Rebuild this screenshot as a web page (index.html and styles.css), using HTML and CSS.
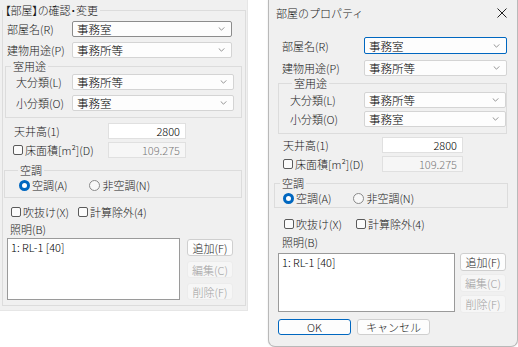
FILE: index.html
```html
<!doctype html>
<html lang="ja">
  <head>
    <meta charset="UTF-8" />
    <title>部屋のプロパティ</title>
    <link rel="stylesheet" href="styles.css">
  </head>
  <body>
    <main class="screen">
      <!-- embedded panel -->
      <section class="panel">
        <fieldset class="group group-main">
          <legend class="legend legend-main">【部屋】の確認・変更</legend>
          <div class="field p-row1">
            <span class="label p-lbl1">部屋名(R)</span>
            <div class="combo combo-hot p-combo">事務室<svg class="chev" viewBox="0 0 8 5"><polyline points="0.5,0.5 4,4 7.5,0.5" /></svg></div>
          </div>
          <div class="field p-row2">
            <span class="label p-lbl1">建物用途(P)</span>
            <div class="combo p-combo">事務所等<svg class="chev" viewBox="0 0 8 5"><polyline points="0.5,0.5 4,4 7.5,0.5" /></svg></div>
          </div>
          <fieldset class="group p-sub">
            <legend class="legend p-sub-legend">室用途</legend>
            <div class="field">
              <span class="label p-lbl2">大分類(L)</span>
              <div class="combo p-combo2">事務所等<svg class="chev" viewBox="0 0 8 5"><polyline points="0.5,0.5 4,4 7.5,0.5" /></svg></div>
            </div>
            <div class="field p-row-sm">
              <span class="label p-lbl2">小分類(O)</span>
              <div class="combo p-combo2">事務室<svg class="chev" viewBox="0 0 8 5"><polyline points="0.5,0.5 4,4 7.5,0.5" /></svg></div>
            </div>
          </fieldset>
          <div class="field p-height">
            <span class="label p-lbl3">天井高(1)</span>
            <div class="edit p-edit">2800</div>
          </div>
          <div class="field p-area">
            <label class="check p-lbl4"><span class="box"></span>床面積[m²](D)</label>
            <div class="edit edit-off p-edit">109.275</div>
          </div>
          <fieldset class="group p-air">
            <legend class="legend p-air-legend">空調</legend>
            <div class="radios">
              <label class="radio p-radio1"><span class="dot dot-on"></span>空調(A)</label>
              <label class="radio p-radio2"><span class="dot"></span>非空調(N)</label>
            </div>
          </fieldset>
          <div class="checks p-checks">
            <label class="check p-check1"><span class="box"></span>吹抜け(X)</label>
            <label class="check p-check2"><span class="box"></span>計算除外(4)</label>
          </div>
          <div class="caption p-caption">照明(B)</div>
          <div class="list-row p-list-row">
            <div class="listbox p-listbox">1: RL-1 [40]</div>
            <div class="buttons p-buttons">
              <button class="btn p-btn">追加(F)</button>
              <button class="btn btn-off p-btn">編集(C)</button>
              <button class="btn btn-off p-btn">削除(F)</button>
            </div>
          </div>
        </fieldset>
      </section>

      <!-- dialog window -->
      <section class="dialog">
        <header class="titlebar">
          <span class="title">部屋のプロパティ</span>
          <svg class="close" viewBox="0 0 10 10"><path d="M0.5 0.5 L9.5 9.5 M9.5 0.5 L0.5 9.5" /></svg>
        </header>
        <div class="dialog-body">
          <div class="field">
            <span class="label d-lbl1">部屋名(R)</span>
            <div class="combo combo-focus d-combo">事務室<svg class="chev" viewBox="0 0 8 5"><polyline points="0.5,0.5 4,4 7.5,0.5" /></svg></div>
          </div>
          <div class="field d-row2">
            <span class="label d-lbl1">建物用途(P)</span>
            <div class="combo d-combo">事務所等<svg class="chev" viewBox="0 0 8 5"><polyline points="0.5,0.5 4,4 7.5,0.5" /></svg></div>
          </div>
          <fieldset class="group d-sub">
            <legend class="legend d-sub-legend">室用途</legend>
            <div class="field">
              <span class="label d-lbl2">大分類(L)</span>
              <div class="combo d-combo2">事務所等<svg class="chev" viewBox="0 0 8 5"><polyline points="0.5,0.5 4,4 7.5,0.5" /></svg></div>
            </div>
            <div class="field d-row-sm">
              <span class="label d-lbl2">小分類(O)</span>
              <div class="combo d-combo2">事務室<svg class="chev" viewBox="0 0 8 5"><polyline points="0.5,0.5 4,4 7.5,0.5" /></svg></div>
            </div>
          </fieldset>
          <div class="field d-height">
            <span class="label d-lbl3">天井高(1)</span>
            <div class="edit d-edit">2800</div>
          </div>
          <div class="field d-area">
            <label class="check d-lbl4"><span class="box"></span>床面積[m²](D)</label>
            <div class="edit edit-off d-edit">109.275</div>
          </div>
          <fieldset class="group d-air">
            <legend class="legend d-air-legend">空調</legend>
            <div class="radios">
              <label class="radio d-radio1"><span class="dot dot-on"></span>空調(A)</label>
              <label class="radio d-radio2"><span class="dot"></span>非空調(N)</label>
            </div>
          </fieldset>
          <div class="checks d-checks">
            <label class="check d-check1"><span class="box"></span>吹抜け(X)</label>
            <label class="check d-check2"><span class="box"></span>計算除外(4)</label>
          </div>
          <div class="caption d-caption">照明(B)</div>
          <div class="list-row d-list-row">
            <div class="listbox d-listbox">1: RL-1 [40]</div>
            <div class="buttons d-buttons">
              <button class="btn d-btn">追加(F)</button>
              <button class="btn btn-off d-btn">編集(C)</button>
              <button class="btn btn-off d-btn">削除(F)</button>
            </div>
          </div>
          <div class="footer">
            <button class="btn btn-default">OK</button>
            <button class="btn btn-cancel">キャンセル</button>
          </div>
        </div>
      </section>
    </main>
  </body>
</html>
```

FILE: styles.css
```css
* {
  margin: 0;
  padding: 0;
  box-sizing: border-box;
}

body {
  font-family: "Noto Sans CJK JP", "Noto Sans", sans-serif;
  font-size: 11px;
  font-weight: 300;
  line-height: 14px;
  color: #1a1a1a;
  background: #ffffff;
}

.screen {
  display: flex;
  align-items: flex-start;
  gap: 20px;
  width: 518px;
  height: 347px;
}

/* ---------- shared controls ---------- */

.group {
  border: 1px solid #dcdcdc;
  min-width: 0;
}

.legend {
  padding: 0 2px;
  line-height: 14px;
  height: 14px;
}

.field {
  display: flex;
  align-items: center;
}

.label {
  flex: none;
  white-space: nowrap;
}

.combo {
  display: flex;
  align-items: center;
  justify-content: space-between;
  height: 16px;
  padding: 0 6px 0 4px;
  background: #fdfdfd;
  border: 1px solid #d4d4d4;
  border-radius: 2px;
  color: #000;
  font-size: 11.5px;
}

.combo-hot {
  border-color: #8c8c8c;
}

.combo-focus {
  border-color: #0067c0;
  height: 17px;
}

.chev {
  width: 7px;
  height: 4px;
  fill: none;
  stroke: #7a7a7a;
  stroke-width: 1;
}

.edit {
  height: 16px;
  padding: 0 5px;
  text-align: right;
  background: #ffffff;
  border: 1px solid #e0e0e0;
  color: #000;
  font-size: 11px;
}

.edit-off {
  background: #f6f6f6;
  color: #7a7a7a;
}

.check,
.radio {
  display: flex;
  align-items: center;
  gap: 2px;
  white-space: nowrap;
}

.box {
  width: 10px;
  height: 10px;
  border: 1px solid #5a5a5a;
  border-radius: 2px;
  background: #fbfbfb;
}

.dot {
  width: 11px;
  height: 11px;
  border: 1px solid #8a8a8a;
  border-radius: 50%;
  background: #f8f8f8;
}

.dot-on {
  border: 3px solid #0067c0;
  background: #ffffff;
}

.radios,
.checks {
  display: flex;
  height: 14px;
  align-items: center;
}

.list-row {
  display: flex;
  align-items: flex-start;
}

.listbox {
  background: #ffffff;
  border: 1px solid #9a9a9a;
  padding: 1px 3px;
  font-size: 11px;
  color: #000;
}

.buttons {
  display: flex;
  flex-direction: column;
}

.btn {
  font-family: inherit;
  font-weight: 300;
  font-size: 11px;
  line-height: 14px;
  height: 17px;
  background: #fdfdfd;
  border: 1px solid #cfcfcf;
  border-radius: 3px;
  color: #1a1a1a;
}

.btn-off {
  background: #f6f6f6;
  border-color: #ececec;
  color: #a0a0a0;
}

/* ---------- left panel ---------- */

.panel {
  width: 248px;
  height: 311px;
  padding: 3px 2px 0 2px;
  background: #f0f0f0;
  border-right: 1px solid #e6e6e6;
  border-bottom: 1px solid #e6e6e6;
}

.group-main {
  width: 244px;
  height: 303px;
  padding: 4px 3px 0 4px;
}

.legend-main {
  margin-left: -4px;
  font-feature-settings: "palt";
}

.p-row2 {
  margin-top: 5px;
}

.p-lbl1 {
  width: 65px;
}

.p-combo {
  width: 160px;
}

.p-sub {
  margin: 1px 0 0 -2px;
  padding: 1px 6px 6px 10px;
}

.p-sub-legend {
  margin-left: -5px;
}

.p-lbl2 {
  width: 56px;
}

.p-combo2 {
  width: 162px;
}

.p-row-sm {
  margin-top: 5px;
}

.p-height {
  margin-top: 5px;
}

.p-lbl3 {
  width: 94px;
  margin-left: 7px;
}

.p-edit {
  width: 78px;
}

.p-area {
  margin-top: 3px;
}

.p-lbl4 {
  width: 95px;
  margin-left: 6px;
}

.p-air {
  margin: 5px 0 0 -3px;
  padding: 1px 4px 5px 14px;
}

.p-air-legend {
  margin-left: -1px;
}

.p-radio2 {
  margin-left: 22px;
}

.p-checks {
  margin-top: 7px;
  padding-left: 4px;
}

.p-check2 {
  margin-left: 9px;
}

.p-caption {
  margin-top: 3px;
  padding-left: 3px;
}

.p-list-row {
  margin-top: 2px;
  gap: 7px;
}

.p-listbox {
  width: 173px;
  height: 62px;
}

.p-buttons {
  gap: 5px;
  padding-top: 1px;
}

.p-btn {
  width: 46px;
}

/* ---------- dialog ---------- */

.dialog {
  width: 250px;
  height: 347px;
  background: #f0f0f0;
  border: 1px solid #b9b9b9;
  border-top: none;
  border-radius: 0 0 7px 7px;
  box-shadow: 0 0 2px rgba(0, 0, 0, 0.12);
}

.titlebar {
  display: flex;
  align-items: center;
  justify-content: space-between;
  height: 25px;
  padding: 0 10px 0 7px;
}

.close {
  width: 10px;
  height: 10px;
  stroke: #202020;
  stroke-width: 1;
}

.dialog-body {
  padding: 12px 0 0 9px;
}

.d-lbl1 {
  width: 82px;
  margin-left: 4px;
}

.d-combo {
  width: 143px;
}

.d-row2 {
  margin-top: 6px;
}

.d-sub {
  width: 229px;
  margin-top: 0;
  padding: 2px 0 6px 11px;
}

.d-sub-legend {
  margin-left: 2px;
}

.d-lbl2 {
  width: 74px;
}

.d-combo2 {
  width: 142px;
}

.d-row-sm {
  margin-top: 3px;
}

.d-height {
  margin-top: 3px;
}

.d-lbl3 {
  width: 99px;
  margin-left: 5px;
}

.d-edit {
  width: 81px;
}

.d-area {
  margin-top: 3px;
}

.d-lbl4 {
  width: 99px;
  margin-left: 5px;
}

.d-air {
  width: 234px;
  margin: 4px 0 0 -4px;
  padding: 1px 0 2px 8px;
}

.d-air-legend {
  margin-left: -3px;
}

.d-radio2 {
  margin-left: 22px;
}

.d-checks {
  margin-top: 9px;
  padding-left: 6px;
}

.d-check2 {
  margin-left: 14px;
}

.d-caption {
  margin-top: 4px;
  padding-left: 4px;
}

.d-list-row {
  margin-top: 4px;
  gap: 5px;
}

.d-listbox {
  width: 177px;
  height: 59px;
}

.d-buttons {
  gap: 3px;
}

.d-btn {
  width: 46px;
  height: 18px;
}

.footer {
  display: flex;
  gap: 6px;
  margin-top: 6px;
}

.btn-default {
  width: 73px;
  height: 16px;
  border: 1.5px solid #0067c0;
}

.btn-cancel {
  width: 73px;
  height: 16px;
}
```
